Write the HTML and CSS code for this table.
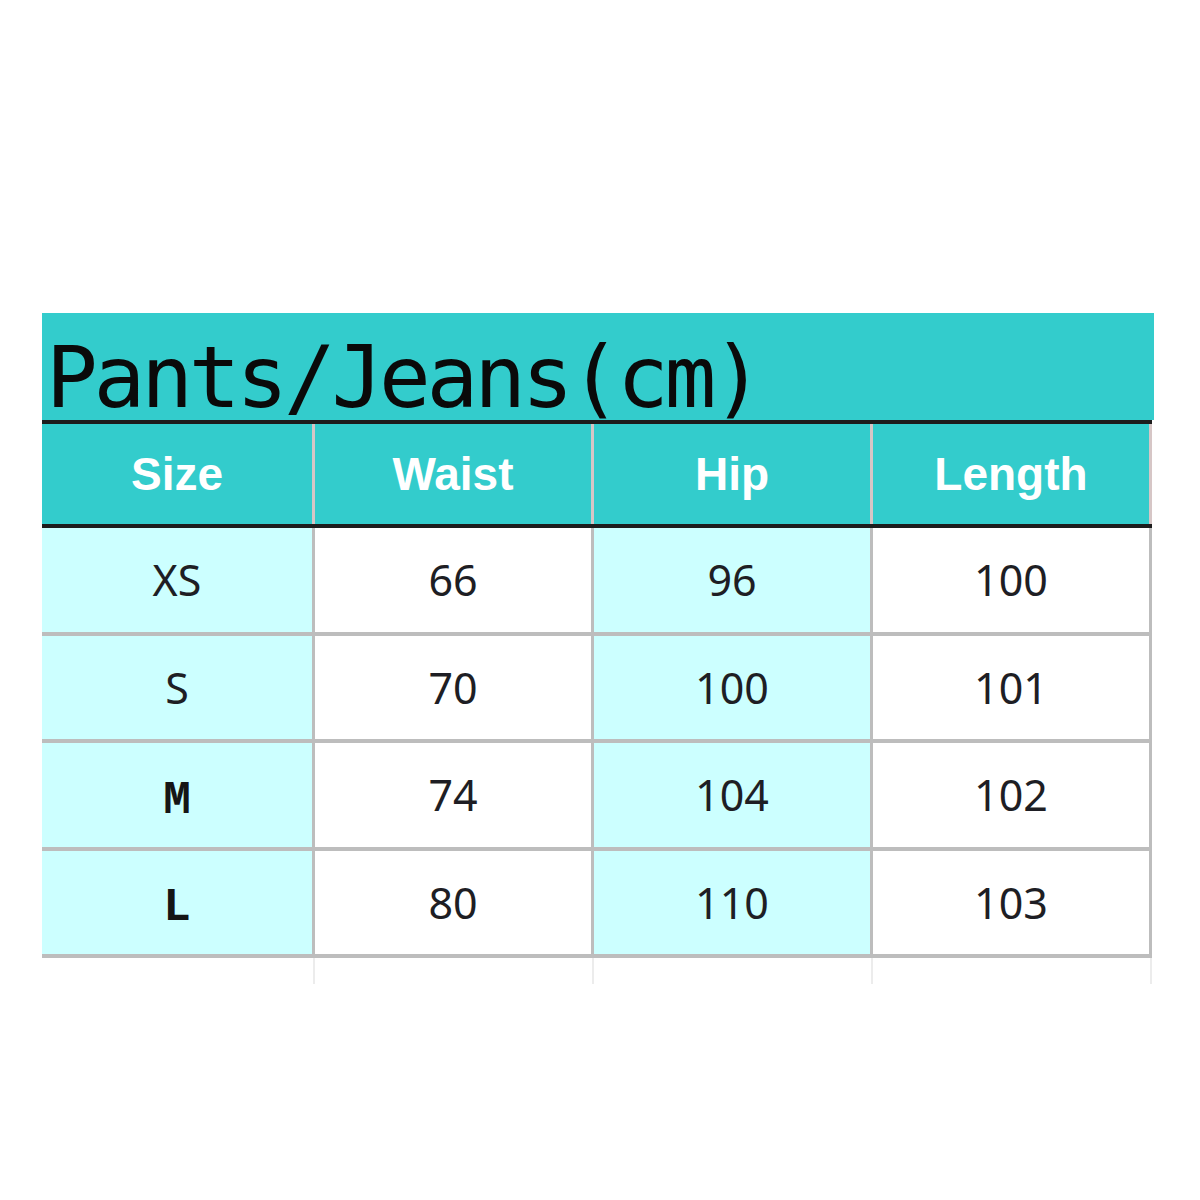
FILE: index.html
```html
<!DOCTYPE html>
<html>
<head>
<meta charset="utf-8">
<link rel="stylesheet" href="styles.css">
</head>
<body>
<div class="sheet">
  <div class="title">Pants/Jeans(cm)</div>
  <div class="table">
    <div class="row head">
      <div class="cell">Size</div>
      <div class="cell">Waist</div>
      <div class="cell">Hip</div>
      <div class="cell">Length</div>
    </div>
    <div class="row">
      <div class="cell tint">XS</div>
      <div class="cell">66</div>
      <div class="cell tint">96</div>
      <div class="cell">100</div>
    </div>
    <div class="row">
      <div class="cell tint">S</div>
      <div class="cell">70</div>
      <div class="cell tint">100</div>
      <div class="cell">101</div>
    </div>
    <div class="row">
      <div class="cell tint mono">M</div>
      <div class="cell">74</div>
      <div class="cell tint">104</div>
      <div class="cell">102</div>
    </div>
    <div class="row">
      <div class="cell tint mono">L</div>
      <div class="cell">80</div>
      <div class="cell tint">110</div>
      <div class="cell">103</div>
    </div>
    <div class="row tail">
      <div class="cell"></div>
      <div class="cell"></div>
      <div class="cell"></div>
      <div class="cell"></div>
    </div>
  </div>
</div>
</body>
</html>
```

FILE: styles.css
```css
html, body {
  margin: 0;
  padding: 0;
  background: #ffffff;
}

.sheet {
  padding-top: 313px;
  padding-left: 42px;
}

.title {
  box-sizing: border-box;
  width: 1112px;
  height: 107px;
  padding-top: 21px;
  padding-left: 4px;
  background: #33cccc;
  font-family: "DejaVu Sans Mono", "Liberation Mono", monospace;
  font-size: 86px;
  line-height: 86px;
  letter-spacing: -4.2px;
  color: #0a0a0a;
  white-space: nowrap;
}

.table {
  width: 1110px;
}

.row {
  display: grid;
  grid-template-columns: 273px 279px 279px 279px;
  height: 107px;
  box-sizing: border-box;
  border-bottom: 4px solid #bdbdbd;
}

.row:nth-child(n+2) {
  height: 107.5px;
}

.cell {
  display: flex;
  align-items: center;
  justify-content: center;
  border-right: 3px solid #bdbdbd;
  background: #ffffff;
  font-family: "Noto Sans", "Liberation Sans", sans-serif;
  font-size: 43px;
  color: #1e1e24;
}

.cell.tint {
  background: #ccffff;
}

.cell.mono {
  padding-top: 12px;
  box-sizing: border-box;
  font-family: "Liberation Mono", monospace;
  font-weight: bold;
  font-size: 46px;
  color: #151515;
}

.row.head {
  height: 108px;
  border-top: 4px solid #1c1c1c;
  border-bottom: 4px solid #1c1c1c;
}

.row.head .cell {
  background: #33cccc;
  border-right-color: #d6c6c6;
  font-family: "Liberation Sans", sans-serif;
  font-weight: bold;
  font-size: 46px;
  color: #ffffff;
}

.row.tail {
  height: 26px;
  border-bottom: none;
}

.row.tail .cell {
  border-right: 2px solid #ececec;
}
```
